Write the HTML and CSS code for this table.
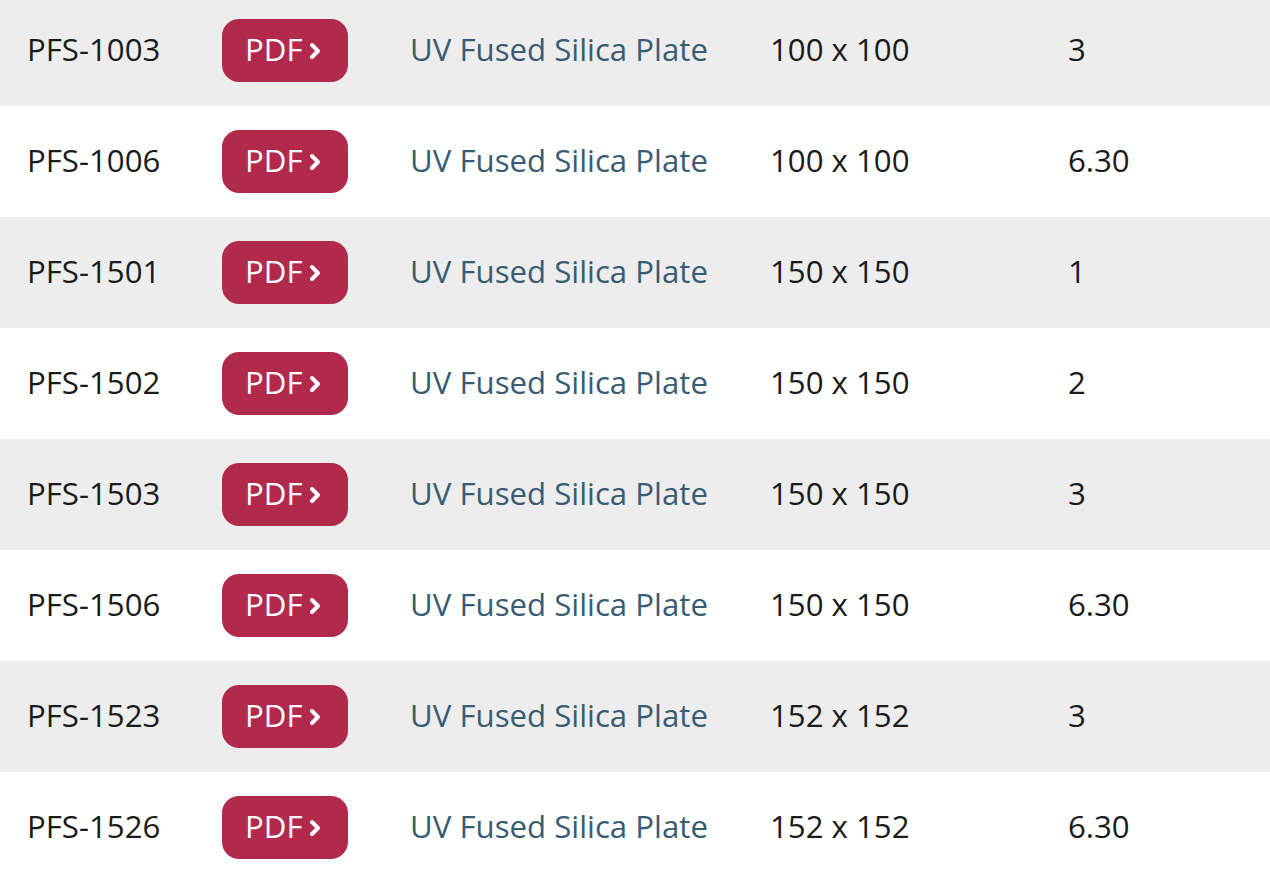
FILE: index.html
```html
<!DOCTYPE html>
<html>
<head>
<meta charset="utf-8">
<link rel="stylesheet" href="styles.css">
</head>
<body>
<div class="table">
  <div class="row alt"><span class="txt">PFS-1003</span><span class="cell"><a class="pdf">PDF<svg class="chev" viewBox="0 0 14 18"><path d="M4 3 L10 9 L4 15"/></svg></a></span><span class="txt name">UV Fused Silica Plate</span><span class="txt">100 x 100</span><span class="txt">3</span></div>
  <div class="row"><span class="txt">PFS-1006</span><span class="cell"><a class="pdf">PDF<svg class="chev" viewBox="0 0 14 18"><path d="M4 3 L10 9 L4 15"/></svg></a></span><span class="txt name">UV Fused Silica Plate</span><span class="txt">100 x 100</span><span class="txt">6.30</span></div>
  <div class="row alt"><span class="txt">PFS-1501</span><span class="cell"><a class="pdf">PDF<svg class="chev" viewBox="0 0 14 18"><path d="M4 3 L10 9 L4 15"/></svg></a></span><span class="txt name">UV Fused Silica Plate</span><span class="txt">150 x 150</span><span class="txt">1</span></div>
  <div class="row"><span class="txt">PFS-1502</span><span class="cell"><a class="pdf">PDF<svg class="chev" viewBox="0 0 14 18"><path d="M4 3 L10 9 L4 15"/></svg></a></span><span class="txt name">UV Fused Silica Plate</span><span class="txt">150 x 150</span><span class="txt">2</span></div>
  <div class="row alt"><span class="txt">PFS-1503</span><span class="cell"><a class="pdf">PDF<svg class="chev" viewBox="0 0 14 18"><path d="M4 3 L10 9 L4 15"/></svg></a></span><span class="txt name">UV Fused Silica Plate</span><span class="txt">150 x 150</span><span class="txt">3</span></div>
  <div class="row"><span class="txt">PFS-1506</span><span class="cell"><a class="pdf">PDF<svg class="chev" viewBox="0 0 14 18"><path d="M4 3 L10 9 L4 15"/></svg></a></span><span class="txt name">UV Fused Silica Plate</span><span class="txt">150 x 150</span><span class="txt">6.30</span></div>
  <div class="row alt"><span class="txt">PFS-1523</span><span class="cell"><a class="pdf">PDF<svg class="chev" viewBox="0 0 14 18"><path d="M4 3 L10 9 L4 15"/></svg></a></span><span class="txt name">UV Fused Silica Plate</span><span class="txt">152 x 152</span><span class="txt">3</span></div>
  <div class="row"><span class="txt">PFS-1526</span><span class="cell"><a class="pdf">PDF<svg class="chev" viewBox="0 0 14 18"><path d="M4 3 L10 9 L4 15"/></svg></a></span><span class="txt name">UV Fused Silica Plate</span><span class="txt">152 x 152</span><span class="txt">6.30</span></div>
</div>
</body>
</html>
```
FILE: styles.css
```css
html, body {
  margin: 0;
  padding: 0;
  background: #fff;
}
body {
  font-family: "Open Sans", "Noto Sans", sans-serif;
  font-size: 31.2px;
  color: #1b1b1b;
  overflow: hidden;
}
.table {
  margin-top: -5px;
}
.row {
  display: grid;
  grid-template-columns: 195px 188px 360px 298px 1fr;
  align-items: center;
  height: 111px;
  padding-left: 27px;
  background: #fff;
}
.row.alt {
  background: #ededed;
}
.txt {
  padding-bottom: 4px;
}
.cell {
  display: flex;
  align-items: center;
}
.pdf {
  display: inline-flex;
  align-items: center;
  box-sizing: border-box;
  width: 126px;
  height: 63px;
  padding-left: 23px;
  padding-bottom: 2px;
  border-radius: 17px;
  background: #b12a4b;
  color: #fff;
  line-height: 1;
}
.chev {
  width: 14px;
  height: 18px;
  margin-left: 5px;
  margin-top: 2px;
}
.chev path {
  fill: none;
  stroke: #fff;
  stroke-width: 4;
  stroke-linecap: round;
  stroke-linejoin: round;
}
.name {
  color: #395c72;
}
```
